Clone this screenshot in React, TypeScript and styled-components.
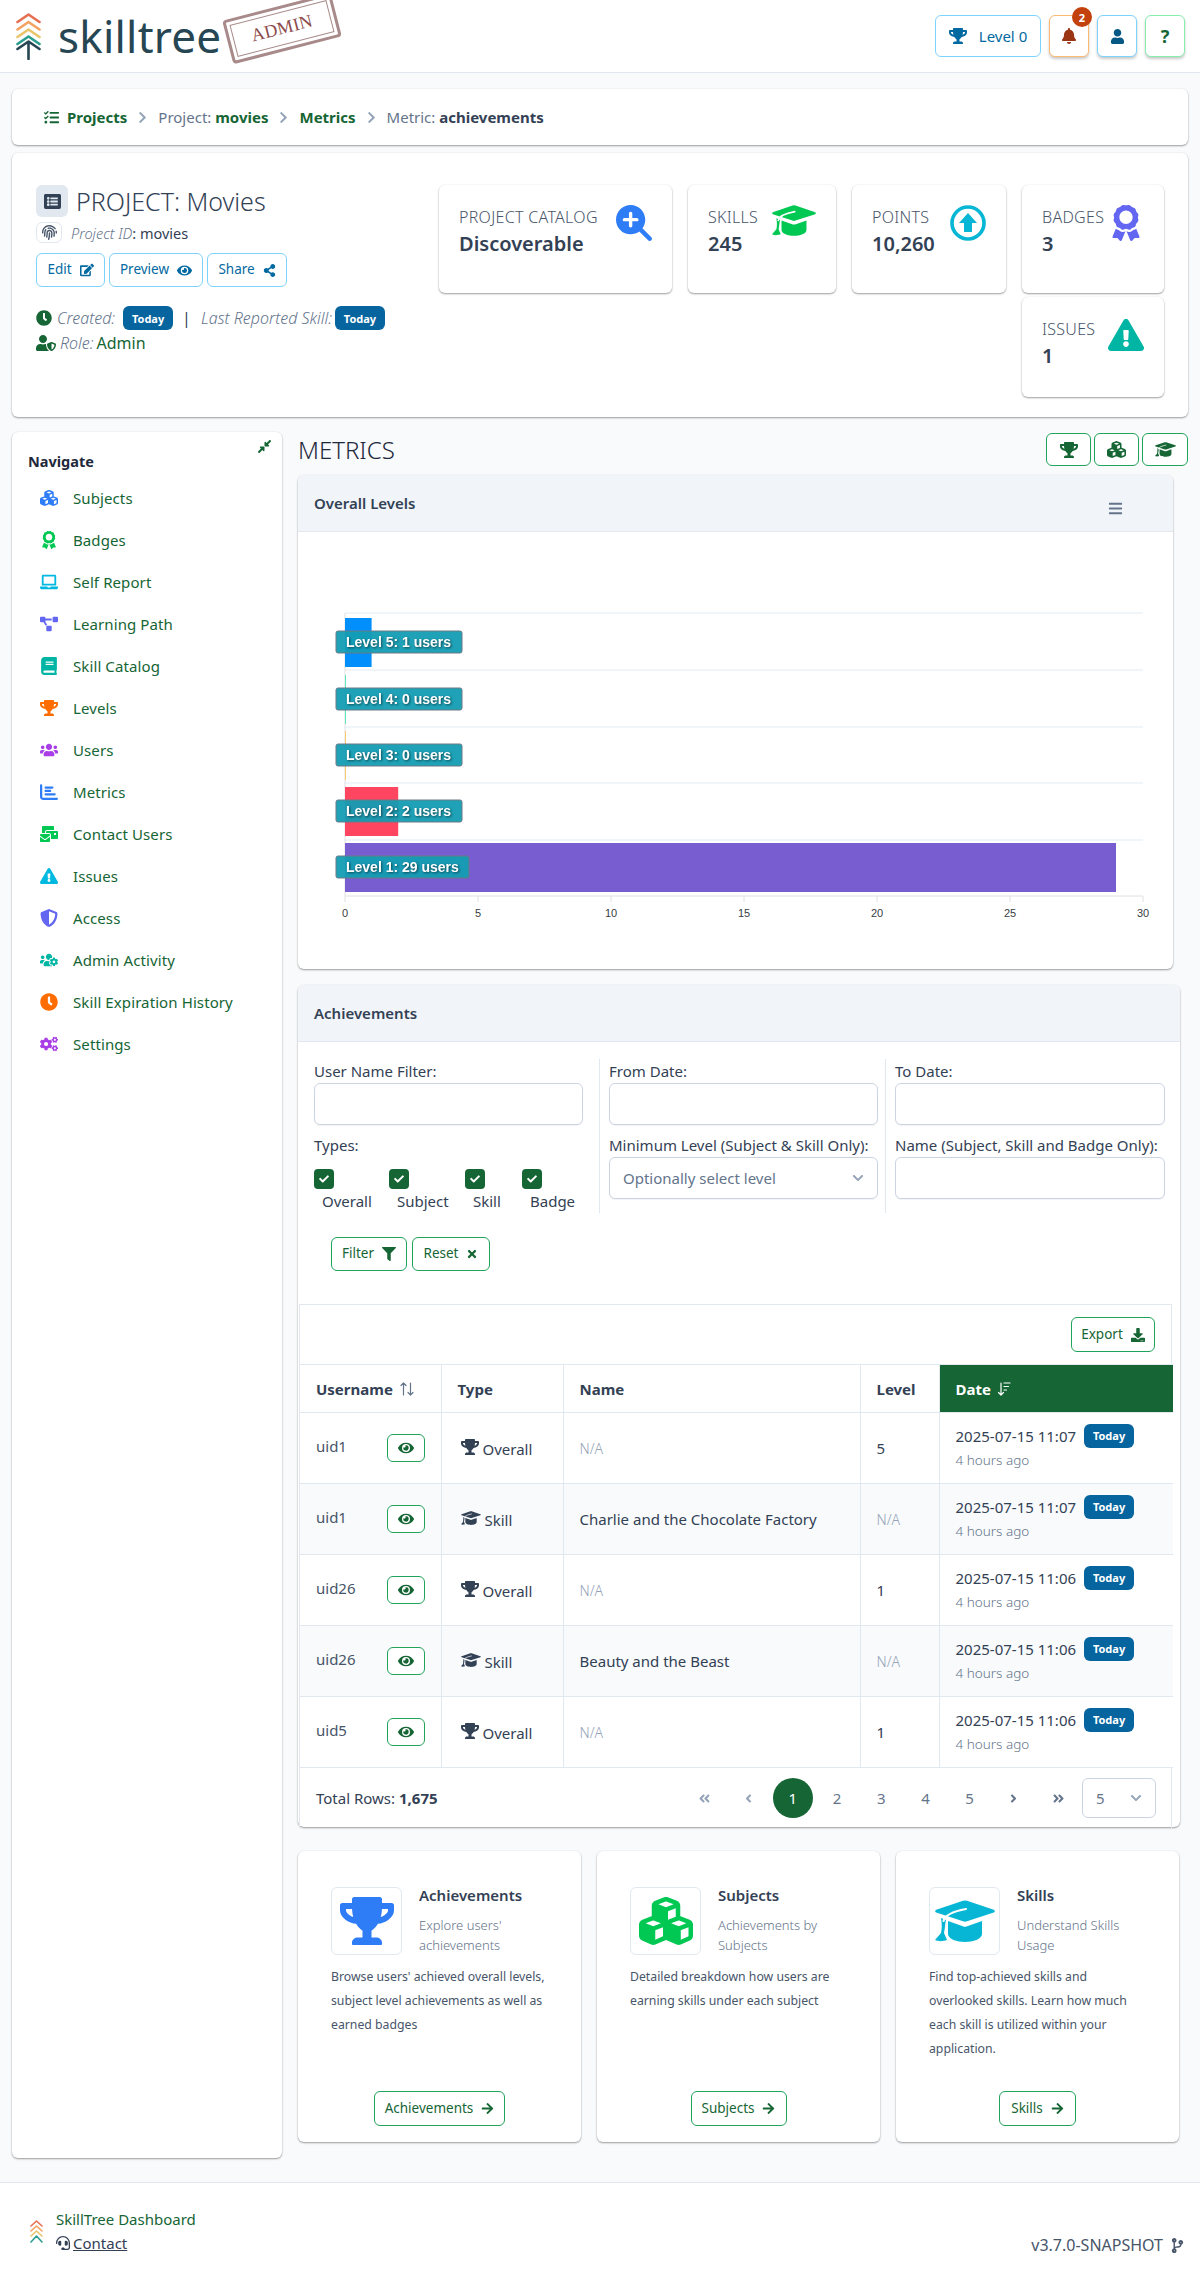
import React from 'react';
import styled, { createGlobalStyle } from 'styled-components';
import {
  FaTrophy, FaBell, FaUser, FaTasks, FaListAlt, FaFingerprint, FaEdit, FaEye, FaShareAlt, FaClock, FaUserShield,
  FaAward, FaExclamationTriangle, FaLaptop, FaProjectDiagram, FaBook, FaUsers,
  FaMailBulk, FaShieldAlt, FaUsersCog, FaCogs, FaCompressAlt, FaFilter, FaTimes, FaDownload, FaHeadset,
  FaCodeBranch, FaArrowRight, FaCheck, FaChevronRight, FaChevronDown, FaAngleDoubleLeft, FaAngleLeft, FaAngleRight, FaAngleDoubleRight, FaBars,
} from 'react-icons/fa';
import { FaCubes, FaMagnifyingGlassPlus, FaChartBar } from 'react-icons/fa6';

const FONT = '"Noto Sans", "Open Sans", sans-serif';
const GREEN = '#166534';
const BLUE = '#0369a1';
const TEXT = '#334155';
const MUTED = '#64748b';
const LINE = '#e2e8f0';

const Global = createGlobalStyle`
  html, body { margin: 0; padding: 0; background: #f8fafc; }
  body { font-family: ${FONT}; font-size: 15px; color: ${TEXT}; }
  * { box-sizing: border-box; }
`;

const Page = styled.div`width: 1200px; min-height: 2279px; display: flex; flex-direction: column;`;

/* header */
const TopBar = styled.header`
  height: 73px; background: #fff; border-bottom: 1px solid ${LINE};
  display: flex; align-items: center; justify-content: space-between; padding: 0 15px 0 16px;
`;
const Logo = styled.div`position: relative; display: flex; align-items: center; gap: 17px; height: 47px;`;
const LogoText = styled.span`font-size: 44px; line-height: 47px; font-weight: 400; color: #264653; letter-spacing: 0.2px;`;
const Stamp = styled.div`
  position: absolute; left: 210px; top: -7px; width: 112px; height: 45px; padding: 3px;
  border: 3px solid #a88a8a; border-radius: 4px; transform: rotate(-14.4deg);
`;
const StampInner = styled.div`
  width: 100%; height: 100%; border: 1px solid #a88a8a; display: flex; align-items: center; justify-content: center;
  font-family: "Liberation Serif", serif; font-size: 18px; color: #8c4a4a; letter-spacing: 0.3px;
`;
const TopActions = styled.div`display: flex; align-items: center; gap: 8px;`;
const LevelBtn = styled.div`
  width: 106px; height: 42px; border: 1px solid #7dd3fc; border-radius: 6px; background: #fff; color: ${BLUE};
  display: flex; align-items: center; justify-content: center; gap: 12px; font-size: 15px;
`;
const IconBtn = styled.div<{ $c: string; $b: string }>`
  position: relative; width: 40px; height: 42px; border: 1px solid ${p => p.$b}; border-radius: 6px; background: #fff;
  color: ${p => p.$c}; display: flex; align-items: center; justify-content: center; font-size: 18px; font-weight: 700;
  box-shadow: 0 2px 3px rgba(0,0,0,.22);
`;
const Dot = styled.span`
  position: absolute; right: -4px; top: -9px; width: 20px; height: 20px; border-radius: 50%; background: #c2410c; color: #fff;
  font-size: 11px; font-weight: 700; display: flex; align-items: center; justify-content: center;
`;

/* shared panels */
const Panel = styled.section`
  background: #fff; border-radius: 6px; box-shadow: 0 1px 2px rgba(0,0,0,.38), 0 0 2px rgba(0,0,0,.05);
`;
const Crumbs = styled(Panel)`
  margin: 16px 12px 0; height: 56px; display: flex; align-items: center; padding-left: 32px; gap: 8px; font-size: 15px; color: ${MUTED};
`;
const CrumbStrong = styled.b<{ $c?: string }>`font-weight: 700; color: ${p => p.$c || TEXT};`;
const CrumbLink = styled.b`font-weight: 700; color: ${GREEN}; display: flex; align-items: center; gap: 8px;`;
const CrumbSep = styled.span`color: #94a3b8; display: flex; font-size: 13px; margin: 0 1px;`;

const ProjectCard = styled(Panel)`
  margin: 8px 12px 0; height: 264px; padding: 32px 24px 0; display: flex; justify-content: space-between;
`;
const ProjectInfo = styled.div`display: flex; flex-direction: column;`;
const TitleRow = styled.div`display: flex; align-items: center; gap: 8px; height: 32px;`;
const TitleIcon = styled.span`
  width: 32px; height: 32px; background: #e2e8f0; border-radius: 6px; display: flex; align-items: center; justify-content: center;
  color: #334155; font-size: 17px;
`;
const Title = styled.h1`margin: 0; font-size: 25px; line-height: 32px; font-weight: 300; color: ${TEXT};`;
const IdRow = styled.div`display: flex; align-items: center; gap: 9px; margin-top: 5px; font-size: 14.5px; height: 21px;`;
const IdIcon = styled.span`
  width: 26px; height: 21px; border: 1px solid ${LINE}; border-radius: 6px; display: flex; align-items: center; justify-content: center;
  color: #475569; font-size: 15px;
`;
const Em = styled.i`color: ${MUTED}; font-weight: 300;`;
const BtnRow = styled.div`display: flex; gap: 4px; margin-top: 10px;`;
const Btn = styled.span<{ $tone?: 'blue' | 'green'; $w: number; $h?: number }>`
  width: ${p => p.$w}px; height: ${p => p.$h || 34}px; display: inline-flex; align-items: center; justify-content: center; gap: 8px;
  border: 1px solid ${p => (p.$tone === 'blue' ? '#7dd3fc' : '#22a35a')}; border-radius: 6px; background: #fff;
  color: ${p => (p.$tone === 'blue' ? BLUE : GREEN)}; font-size: 13.5px; line-height: 1; flex: none;
`;
const MetaRow = styled.div<{ $top: number }>`display: flex; align-items: center; margin-top: ${p => p.$top}px; height: 24px; font-size: 16px;`;
const MetaIcon = styled.span<{ $gap: number }>`color: ${GREEN}; display: flex; margin-right: ${p => p.$gap}px; font-size: 16px;`;
const Tag = styled.span<{ $m?: string }>`
  display: inline-flex; width: 50px; height: 24px; align-items: center; justify-content: center; border-radius: 6px; background: #06659f;
  color: #fff; font-size: 11px; font-weight: 700; margin: ${p => p.$m || '0'}; flex: none;
`;
const Bar = styled.span`margin: 0 10px 0 9px; color: ${TEXT};`;
const GreenText = styled.span`color: ${GREEN}; margin-left: 3px;`;

const Stats = styled.div`width: 726px; display: flex; flex-wrap: wrap; justify-content: flex-end; gap: 4px 16px; align-content: flex-start;`;
const Stat = styled(Panel)<{ $w: number; $h: number }>`
  width: ${p => p.$w}px; height: ${p => p.$h}px; padding: 20px 20px 0 20px; display: flex; justify-content: space-between;
`;
const StatLabel = styled.div`font-size: 16px; line-height: 24px; font-weight: 300; color: #475569; text-transform: uppercase; white-space: nowrap; letter-spacing: .3px;`;
const StatValue = styled.div`font-size: 20px; line-height: 30px; font-weight: 600; color: ${TEXT};`;
const StatIcon = styled.span<{ $c: string; $s: number }>`color: ${p => p.$c}; font-size: ${p => p.$s}px; display: flex; line-height: 1; height: 36px;`;

/* body */
const Body = styled.div`flex: 1; display: flex; gap: 16px; padding: 15px 12px 24px;`;
const Side = styled(Panel)`position: relative; width: 270px; flex: none; padding: 20px 0 0 16px;`;
const SideHead = styled.div`font-size: 14.5px; font-weight: 700; color: #1e293b; line-height: 19px; margin-bottom: 6px;`;
const Collapse = styled.span`position: absolute; right: 10px; top: 7px; color: ${GREEN}; font-size: 15px; display: flex;`;
const NavItem = styled.div`height: 42px; display: flex; align-items: center; color: ${GREEN}; font-size: 15px; letter-spacing: .1px;`;
const NavIcon = styled.span<{ $c: string }>`width: 20px; margin: 0 14px 0 11px; display: flex; justify-content: center; color: ${p => p.$c}; font-size: 18px;`;

const Main = styled.main`flex: 1; min-width: 0; display: flex; flex-direction: column;`;
const MainHead = styled.div`display: flex; justify-content: space-between; align-items: center; height: 33px; margin-top: 1px;`;
const MainTitle = styled.h2`margin: 0; font-size: 24px; font-weight: 300; color: #1e293b; line-height: 33px;`;
const HeadBtns = styled.div`display: flex; gap: 3px;`;
const CardHead = styled.div`
  height: 57px; background: #f1f5f9; border-bottom: 1px solid ${LINE}; border-radius: 6px 6px 0 0; padding: 18px 16px 0;
  font-size: 15px; font-weight: 600; color: ${TEXT}; line-height: 20px; display: flex; justify-content: space-between;
`;
const ChartCard = styled(Panel)`margin: 9px 15px 0 0; height: 494px;`;
const Menu = styled.span`color: #64748b; font-size: 15px; display: flex; margin: 8px 34px 0 0;`;
const ChartSvg = styled.svg`display: block;`;
const BarLabel = styled.text`filter: drop-shadow(1px 1px 1px rgba(0,0,0,.55));`;

const Achieve = styled(Panel)`margin: 16px 8px 0 0; height: 842px;`;
const Filters = styled.div`display: grid; grid-template-columns: 285px 286px 1fr; margin: 17px 0 0 16px; width: 858px;`;
const FilterCol = styled.div<{ $first?: boolean }>`
  height: 154px; padding: 2px ${p => (p.$first ? 16 : 7)}px 0 ${p => (p.$first ? 0 : 9)}px;
  border-left: ${p => (p.$first ? 'none' : `1px solid ${LINE}`)};
`;
const Label = styled.div<{ $top?: number }>`font-size: 15px; line-height: 20px; height: 20px; color: ${TEXT}; white-space: nowrap; margin-top: ${p => p.$top || 0}px;`;
const Input = styled.div`
  height: 42px; margin-top: 2px; border: 1px solid #cbd5e1; border-radius: 6px; background: #fff; box-shadow: 0 1px 1px rgba(0,0,0,.05);
  display: flex; align-items: center; justify-content: space-between; padding: 0 13px; color: ${MUTED}; font-size: 15px;
`;
const Checks = styled.div`display: flex; margin-top: 14px;`;
const Check = styled.div<{ $w: number }>`width: ${p => p.$w}px; display: flex; flex-direction: column; font-size: 15px; color: ${TEXT};`;
const Box = styled.span`
  width: 20px; height: 20px; background: ${GREEN}; color: #fff; border-radius: 4px; display: flex; align-items: center; justify-content: center; font-size: 10px;
`;
const CheckText = styled.span`margin: 2px 0 0 8px; line-height: 20px;`;
const FilterBtns = styled.div`display: flex; gap: 5px; margin: 24px 0 0 33px;`;

const TableWrap = styled.div`margin: 33px 8px 0 1px; border-top: 1px solid ${LINE}; border-left: 1px solid ${LINE}; border-right: 1px solid ${LINE};`;
const TableBar = styled.div`height: 59px; display: flex; align-items: center; justify-content: flex-end; padding-right: 16px;`;
const Table = styled.table`width: 100%; border-collapse: collapse; table-layout: fixed;`;
const Th = styled.th<{ $w: number; $on?: boolean }>`
  width: ${p => p.$w}px; height: 48px; padding: 0 16px; text-align: left; font-size: 15px; font-weight: 700;
  border: 1px solid ${LINE}; border-left-width: 0; border-right-width: ${p => (p.$on ? 0 : 1)}px;
  background: ${p => (p.$on ? GREEN : '#fff')}; color: ${p => (p.$on ? '#fff' : TEXT)};
`;
const HeadInner = styled.span`display: inline-flex; align-items: center; gap: 6px;`;
const Tr = styled.tr<{ $alt: boolean }>`background: ${p => (p.$alt ? '#f8fafc' : '#fff')};`;
const Td = styled.td<{ $last?: boolean }>`
  height: 71px; padding: 0 16px; font-size: 15px; color: ${TEXT}; vertical-align: middle; white-space: nowrap;
  border-bottom: 1px solid ${LINE}; border-right: ${p => (p.$last ? 'none' : `1px solid ${LINE}`)};
`;
const UserCell = styled.div`display: flex; justify-content: space-between; align-items: center; color: #475569;`;
const UserName = styled.span`margin-top: -5px;`;
const TypeCell = styled.div`display: flex; align-items: center; gap: 4px; margin-top: 2px; padding-left: 3px;`;
const TypeIcon = styled.span`display: flex; font-size: 18px; color: ${TEXT}; margin-top: -5px;`;
const Na = styled.span`font-size: 14px; font-weight: 300; color: #94a3b8;`;
const DateTop = styled.div`display: flex; align-items: center; gap: 8px; line-height: 24px; margin-top: -2px;`;
const DateSub = styled.div`font-size: 13.5px; font-weight: 300; color: ${MUTED}; line-height: 20px; margin-top: 2px;`;
const Pager = styled.div`height: 60px; display: flex; align-items: center; padding: 0 15px 0 16px;`;
const Total = styled.div`flex: 1; font-size: 15px; color: ${TEXT};`;
const PageBtn = styled.span<{ $on?: boolean }>`
  width: 40px; height: 40px; margin-left: 4.2px; border-radius: 50%; display: flex; align-items: center; justify-content: center;
  background: ${p => (p.$on ? GREEN : 'transparent')}; color: ${p => (p.$on ? '#fff' : MUTED)}; font-size: 15px; flex: none;
`;
const PageSize = styled.div`
  width: 74px; height: 40px; margin-left: 4px; border: 1px solid #cbd5e1; border-radius: 6px; display: flex; align-items: center; justify-content: space-between;
  padding: 0 13px; color: ${MUTED}; font-size: 15px;
`;

const Tiles = styled.div`display: grid; grid-template-columns: repeat(3, 283px); gap: 16px; margin-top: 24px;`;
const Tile = styled(Panel)`height: 291px; padding: 36px 30px 16px 33px; display: flex; flex-direction: column;`;
const TileTop = styled.div`display: flex; gap: 17px;`;
const TileIcon = styled.span<{ $c: string }>`
  width: 71px; height: 68px; flex: none; border: 1px solid ${LINE}; border-radius: 6px; display: flex; align-items: center; justify-content: center;
  color: ${p => p.$c}; font-size: 54px;
`;
const TileTitle = styled.div`font-size: 15px; font-weight: 600; color: ${TEXT}; line-height: 18px; margin-top: -1px;`;
const TileSub = styled.div`font-size: 13px; color: ${MUTED}; line-height: 20px; margin-top: 11px; font-weight: 300;`;
const TileText = styled.p`margin: 10px 0 0; font-size: 12.25px; line-height: 24px; color: #475569;`;
const TileAction = styled.div`margin-top: auto; display: flex; justify-content: center; padding-right: 3px;`;

const Foot = styled.footer`
  height: 97px; background: #fff; border-top: 1px solid ${LINE}; display: flex; justify-content: space-between; align-items: flex-start;
  padding: 24px 15px 0 30px;
`;
const FootLeft = styled.div`display: flex; align-items: center; gap: 13px;`;
const FootLines = styled.div`display: flex; flex-direction: column; line-height: 24px; font-size: 15px;`;
const FootName = styled.span`color: ${GREEN};`;
const FootContact = styled.span`display: flex; align-items: center; gap: 3px;`;
const FootLink = styled.span`text-decoration: underline; color: ${TEXT};`;
const Version = styled.div`display: flex; align-items: center; gap: 7px; color: #475569; font-size: 16px; margin-top: 27px;`;

const TreeMark = () => (
  <svg width="25" height="47" viewBox="0 0 25 47" fill="none" strokeWidth="2.6" strokeLinecap="round" strokeLinejoin="round">
    <path d="M1.5 9 12.5 1.5 23.5 9" stroke="#e76f51" />
    <path d="M1.5 16.5 12.5 9 23.5 16.5" stroke="#f4a261" />
    <path d="M1.5 24 12.5 16.5 23.5 24" stroke="#e9c46a" />
    <path d="M1.5 31 12.5 23.5 23.5 31" stroke="#2a9d8f" />
    <path d="M1.5 36 12.5 28.5 23.5 36M12.5 29V46" stroke="#264653" />
  </svg>
);
const SmallMark = () => (
  <svg width="13" height="23" viewBox="0 0 13 23" fill="none" strokeWidth="1.6" strokeLinecap="round" strokeLinejoin="round">
    <path d="M1 6 6.5 1 12 6" stroke="#e76f51" />
    <path d="M1 11 6.5 6 12 11" stroke="#f4a261" />
    <path d="M1 16 6.5 11 12 16" stroke="#e9c46a" />
    <path d="M1 22 6.5 16 12 22" stroke="#2a9d8f" />
  </svg>
);
const PointsIcon = () => (
  <svg width="36" height="36" viewBox="0 0 36 36">
    <circle cx="18" cy="18" r="16" fill="none" stroke="#06b6d4" strokeWidth="3.6" />
    <path d="M18 8 27 18H22V27H14V18H9Z" fill="#06b6d4" />
  </svg>
);
const CapIcon = ({ w, bg = '#fff' }: { w: number; bg?: string }) => (
  <svg width={w} height={(w * 42) / 60} viewBox="0 0 60 42" fill="currentColor">
    <path d="M28 .8a6 6 0 0 1 4 0L58 9.4c2.4.9 2.4 2.6 0 3.4L32 21.3a6 6 0 0 1-4 0L2 12.8c-2.4-.8-2.4-2.5 0-3.4Z" />
    <path d="M13 21 28.500 26.500a5 5 0 0 0 3 0L47 21V34C47 39 38 42 30 42S13 39 13 34Z" />
    <path d="M6 18C7 24 7 29 6 33L0 40C4 42 9 41 12 40L9 33C10 28 10 24 11 20Z" />
    <path d="M31 9C20 11 10 15 8.500 21" fill="none" stroke={bg} strokeWidth="2.2" strokeLinecap="round" />
  </svg>
);
const SortBoth = () => (
  <svg width="16" height="16" viewBox="0 0 16 16" fill="none" stroke="#64748b" strokeWidth="1.2" strokeLinecap="round" strokeLinejoin="round">
    <path d="M4.5 14V2M2 4.500 4.500 2 7 4.500M11.500 2V14M9 11.500 11.500 14 14 11.500" />
  </svg>
);
const SortDown = () => (
  <svg width="14" height="16" viewBox="0 0 14 16" fill="none" stroke="#fff" strokeWidth="1.2" strokeLinecap="round" strokeLinejoin="round">
    <path d="M4 2V14M1.500 11.500 4 14 6.500 11.500M7 2H13M7 5.500H11.500M7 9H9.500" />
  </svg>
);

const bars = [
  { y: 86, w: 26.6, c: '#008ffb', t: 'Level 5: 1 users', lw: 126 },
  { y: 143, w: 1, c: '#00e396', t: 'Level 4: 0 users', lw: 126 },
  { y: 199, w: 1, c: '#feb019', t: 'Level 3: 0 users', lw: 126 },
  { y: 255, w: 53.2, c: '#ff4560', t: 'Level 2: 2 users', lw: 126 },
  { y: 311, w: 771, c: '#775dd0', t: 'Level 1: 29 users', lw: 133 },
];
const ticks = [0, 5, 10, 15, 20, 25, 30];

const OverallChart = () => (
  <ChartSvg width="875" height="437" viewBox="0 0 875 437" fontFamily='"Liberation Sans", sans-serif'>
    {[81, 138, 195, 251, 308].map(y => <line key={y} x1="47" x2="845" y1={y} y2={y} stroke="#e0ecf2" strokeWidth="1.2" />)}
    <line x1="47" x2="845" y1="364" y2="364" stroke="#e0e0e0" />
    <line x1="47" x2="47" y1="81" y2="364" stroke="#e0e0e0" />
    {bars.map(b => (
      <g key={b.t}>
        <rect x="47" y={b.y} width={b.w} height="49" fill={b.c} fillOpacity={b.w < 2 ? 0.6 : 1} />
        <rect x="38" y={b.y + 13} width={b.lw} height="22" rx="2" fill="#139db3" fillOpacity=".95" stroke="#6b7b85" />
        <BarLabel x="48" y={b.y + 29} fontSize="14" fontWeight="700" fill="#fff">{b.t}</BarLabel>
      </g>
    ))}
    {ticks.map((t, i) => {
      const x = 47 + i * 133;
      return (
        <g key={t}>
          <line x1={x} x2={x} y1="364" y2="370" stroke="#e0e0e0" />
          <text x={x} y="385" textAnchor="middle" fontSize="11" fill="#373d3f">{t}</text>
        </g>
      );
    })}
  </ChartSvg>
);

const nav: [string, React.ComponentType, string][] = [
  ['Subjects', FaCubes, '#2f7df6'], ['Badges', FaAward, '#00c853'], ['Self Report', FaLaptop, '#00b8e0'], ['Learning Path', FaProjectDiagram, '#6366f1'],
  ['Skill Catalog', FaBook, '#00b5a3'], ['Levels', FaTrophy, '#ff6d00'], ['Users', FaUsers, '#a93ee6'], ['Metrics', FaChartBar, '#2f7df6'],
  ['Contact Users', FaMailBulk, '#00c853'], ['Issues', FaExclamationTriangle, '#00b8e0'], ['Access', FaShieldAlt, '#6366f1'], ['Admin Activity', FaUsersCog, '#00b5a3'],
  ['Skill Expiration History', FaClock, '#ff6d00'], ['Settings', FaCogs, '#a93ee6'],
];

const types: [string, number][] = [['Overall', 75], ['Subject', 76], ['Skill', 57], ['Badge', 60]];

const rows = [
  { u: 'uid1', skill: false, n: '', l: '5', d: '2025-07-15 11:07' },
  { u: 'uid1', skill: true, n: 'Charlie and the Chocolate Factory', l: '', d: '2025-07-15 11:07' },
  { u: 'uid26', skill: false, n: '', l: '1', d: '2025-07-15 11:06' },
  { u: 'uid26', skill: true, n: 'Beauty and the Beast', l: '', d: '2025-07-15 11:06' },
  { u: 'uid5', skill: false, n: '', l: '1', d: '2025-07-15 11:06' },
];

export default function App() {
  return (
    <Page>
      <Global />
      <TopBar>
        <Logo>
          <TreeMark />
          <LogoText>skilltree</LogoText>
          <Stamp><StampInner>ADMIN</StampInner></Stamp>
        </Logo>
        <TopActions>
          <LevelBtn><FaTrophy size={18} /><span>Level 0</span></LevelBtn>
          <IconBtn $c="#9a3412" $b="#fdba74"><FaBell size={16} /><Dot>2</Dot></IconBtn>
          <IconBtn $c="#075985" $b="#7dd3fc"><FaUser size={15} /></IconBtn>
          <IconBtn $c={GREEN} $b="#86efac"><span>?</span></IconBtn>
        </TopActions>
      </TopBar>

      <Crumbs>
        <CrumbLink><FaTasks size={15} />Projects</CrumbLink>
        <CrumbSep><FaChevronRight /></CrumbSep>
        <span>Project: <CrumbStrong $c={GREEN}>movies</CrumbStrong></span>
        <CrumbSep><FaChevronRight /></CrumbSep>
        <CrumbLink>Metrics</CrumbLink>
        <CrumbSep><FaChevronRight /></CrumbSep>
        <span>Metric: <CrumbStrong>achievements</CrumbStrong></span>
      </Crumbs>

      <ProjectCard>
        <ProjectInfo>
          <TitleRow><TitleIcon><FaListAlt /></TitleIcon><Title>PROJECT: Movies</Title></TitleRow>
          <IdRow><IdIcon><FaFingerprint /></IdIcon><span><Em>Project ID</Em>: movies</span></IdRow>
          <BtnRow>
            <Btn $tone="blue" $w={69}>Edit <FaEdit size={14} /></Btn>
            <Btn $tone="blue" $w={94}>Preview <FaEye size={15} /></Btn>
            <Btn $tone="blue" $w={80}>Share <FaShareAlt size={13} /></Btn>
          </BtnRow>
          <MetaRow $top={19}>
            <MetaIcon $gap={5}><FaClock /></MetaIcon><Em>Created:</Em><Tag $m="0 0 0 8px">Today</Tag><Bar>|</Bar>
            <Em>Last Reported Skill:</Em><Tag $m="0 0 0 3px">Today</Tag>
          </MetaRow>
          <MetaRow $top={1}>
            <MetaIcon $gap={4}><FaUserShield size={20} /></MetaIcon><Em>Role:</Em><GreenText>Admin</GreenText>
          </MetaRow>
        </ProjectInfo>
        <Stats>
          <Stat $w={233} $h={108}>
            <div><StatLabel>Project Catalog</StatLabel><StatValue>Discoverable</StatValue></div>
            <StatIcon $c="#2f7df6" $s={36}><FaMagnifyingGlassPlus /></StatIcon>
          </Stat>
          <Stat $w={148} $h={108}>
            <div><StatLabel>Skills</StatLabel><StatValue>245</StatValue></div>
            <StatIcon $c="#00c853" $s={36}><CapIcon w={44} /></StatIcon>
          </Stat>
          <Stat $w={154} $h={108}>
            <div><StatLabel>Points</StatLabel><StatValue>10,260</StatValue></div>
            <StatIcon $c="#06b6d4" $s={36}><PointsIcon /></StatIcon>
          </Stat>
          <Stat $w={142} $h={108}>
            <div><StatLabel>Badges</StatLabel><StatValue>3</StatValue></div>
            <StatIcon $c="#6366f1" $s={36}><FaAward /></StatIcon>
          </Stat>
          <Stat $w={142} $h={100}>
            <div><StatLabel>Issues</StatLabel><StatValue>1</StatValue></div>
            <StatIcon $c="#00b5a3" $s={36}><FaExclamationTriangle /></StatIcon>
          </Stat>
        </Stats>
      </ProjectCard>

      <Body>
        <Side>
          <SideHead>Navigate</SideHead>
          <Collapse><FaCompressAlt /></Collapse>
          {nav.map(([t, I, c]) => (
            <NavItem key={t}><NavIcon $c={c}><I /></NavIcon>{t}</NavItem>
          ))}
        </Side>

        <Main>
          <MainHead>
            <MainTitle>METRICS</MainTitle>
            <HeadBtns>
              <Btn $w={45} $h={33}><FaTrophy size={18} /></Btn>
              <Btn $w={45} $h={33}><FaCubes size={19} /></Btn>
              <Btn $w={46} $h={33}><CapIcon w={21} /></Btn>
            </HeadBtns>
          </MainHead>

          <ChartCard>
            <CardHead>Overall Levels<Menu><FaBars /></Menu></CardHead>
            <OverallChart />
          </ChartCard>

          <Achieve>
            <CardHead>Achievements</CardHead>
            <Filters>
              <FilterCol $first>
                <Label>User Name Filter:</Label>
                <Input />
                <Label $top={10}>Types:</Label>
                <Checks>
                  {types.map(([t, w]) => (
                    <Check key={t} $w={w}><Box><FaCheck /></Box><CheckText>{t}</CheckText></Check>
                  ))}
                </Checks>
              </FilterCol>
              <FilterCol>
                <Label>From Date:</Label>
                <Input />
                <Label $top={10}>Minimum Level (Subject &amp; Skill Only):</Label>
                <Input>Optionally select level<FaChevronDown size={12} color="#94a3b8" /></Input>
              </FilterCol>
              <FilterCol>
                <Label>To Date:</Label>
                <Input />
                <Label $top={10}>Name (Subject, Skill and Badge Only):</Label>
                <Input />
              </FilterCol>
            </Filters>
            <FilterBtns>
              <Btn $w={76}>Filter <FaFilter size={14} /></Btn>
              <Btn $w={78}>Reset <FaTimes size={12} /></Btn>
            </FilterBtns>
            <TableWrap>
              <TableBar><Btn $w={84} $h={35}>Export <FaDownload size={14} /></Btn></TableBar>
              <Table>
                <thead>
                  <tr>
                    <Th $w={141}><HeadInner>Username <SortBoth /></HeadInner></Th>
                    <Th $w={122}>Type</Th>
                    <Th $w={297}>Name</Th>
                    <Th $w={79}>Level</Th>
                    <Th $w={234} $on><HeadInner>Date <SortDown /></HeadInner></Th>
                  </tr>
                </thead>
                <tbody>
                  {rows.map((r, i) => (
                    <Tr key={i} $alt={i % 2 === 1}>
                      <Td>
                        <UserCell>
                          <UserName>{r.u}</UserName>
                          <Btn $w={38} $h={28}><FaEye size={16} /></Btn>
                        </UserCell>
                      </Td>
                      <Td>
                        <TypeCell>
                          <TypeIcon>{r.skill ? <CapIcon w={20} bg={i % 2 ? '#f8fafc' : '#fff'} /> : <FaTrophy />}</TypeIcon>
                          {r.skill ? 'Skill' : 'Overall'}
                        </TypeCell>
                      </Td>
                      <Td>{r.n || <Na>N/A</Na>}</Td>
                      <Td>{r.l || <Na>N/A</Na>}</Td>
                      <Td $last>
                        <DateTop>{r.d}<Tag>Today</Tag></DateTop>
                        <DateSub>4 hours ago</DateSub>
                      </Td>
                    </Tr>
                  ))}
                </tbody>
              </Table>
              <Pager>
                <Total>Total Rows: <b>1,675</b></Total>
                <PageBtn><FaAngleDoubleLeft size={13} color="#94a3b8" /></PageBtn>
                <PageBtn><FaAngleLeft size={13} color="#94a3b8" /></PageBtn>
                <PageBtn $on>1</PageBtn>
                <PageBtn>2</PageBtn>
                <PageBtn>3</PageBtn>
                <PageBtn>4</PageBtn>
                <PageBtn>5</PageBtn>
                <PageBtn><FaAngleRight size={13} /></PageBtn>
                <PageBtn><FaAngleDoubleRight size={13} /></PageBtn>
                <PageSize>5<FaChevronDown size={12} color="#94a3b8" /></PageSize>
              </Pager>
            </TableWrap>
          </Achieve>

          <Tiles>
            <Tile>
              <TileTop>
                <TileIcon $c="#2f7df6"><FaTrophy /></TileIcon>
                <div><TileTitle>Achievements</TileTitle><TileSub>Explore users' achievements</TileSub></div>
              </TileTop>
              <TileText>Browse users' achieved overall levels, subject level achievements as well as earned badges</TileText>
              <TileAction><Btn $w={131} $h={35}>Achievements <FaArrowRight size={13} /></Btn></TileAction>
            </Tile>
            <Tile>
              <TileTop>
                <TileIcon $c="#00c853"><FaCubes /></TileIcon>
                <div><TileTitle>Subjects</TileTitle><TileSub>Achievements by Subjects</TileSub></div>
              </TileTop>
              <TileText>Detailed breakdown how users are earning skills under each subject</TileText>
              <TileAction><Btn $w={96} $h={35}>Subjects <FaArrowRight size={13} /></Btn></TileAction>
            </Tile>
            <Tile>
              <TileTop>
                <TileIcon $c="#06b6d4"><CapIcon w={60} /></TileIcon>
                <div><TileTitle>Skills</TileTitle><TileSub>Understand Skills Usage</TileSub></div>
              </TileTop>
              <TileText>Find top-achieved skills and overlooked skills. Learn how much each skill is utilized within your application.</TileText>
              <TileAction><Btn $w={77} $h={35}>Skills <FaArrowRight size={13} /></Btn></TileAction>
            </Tile>
          </Tiles>
        </Main>
      </Body>

      <Foot>
        <FootLeft>
          <SmallMark />
          <FootLines>
            <FootName>SkillTree Dashboard</FootName>
            <FootContact><FaHeadset size={14} /><FootLink>Contact</FootLink></FootContact>
          </FootLines>
        </FootLeft>
        <Version>v3.7.0-SNAPSHOT <FaCodeBranch size={15} /></Version>
      </Foot>
    </Page>
  );
}
